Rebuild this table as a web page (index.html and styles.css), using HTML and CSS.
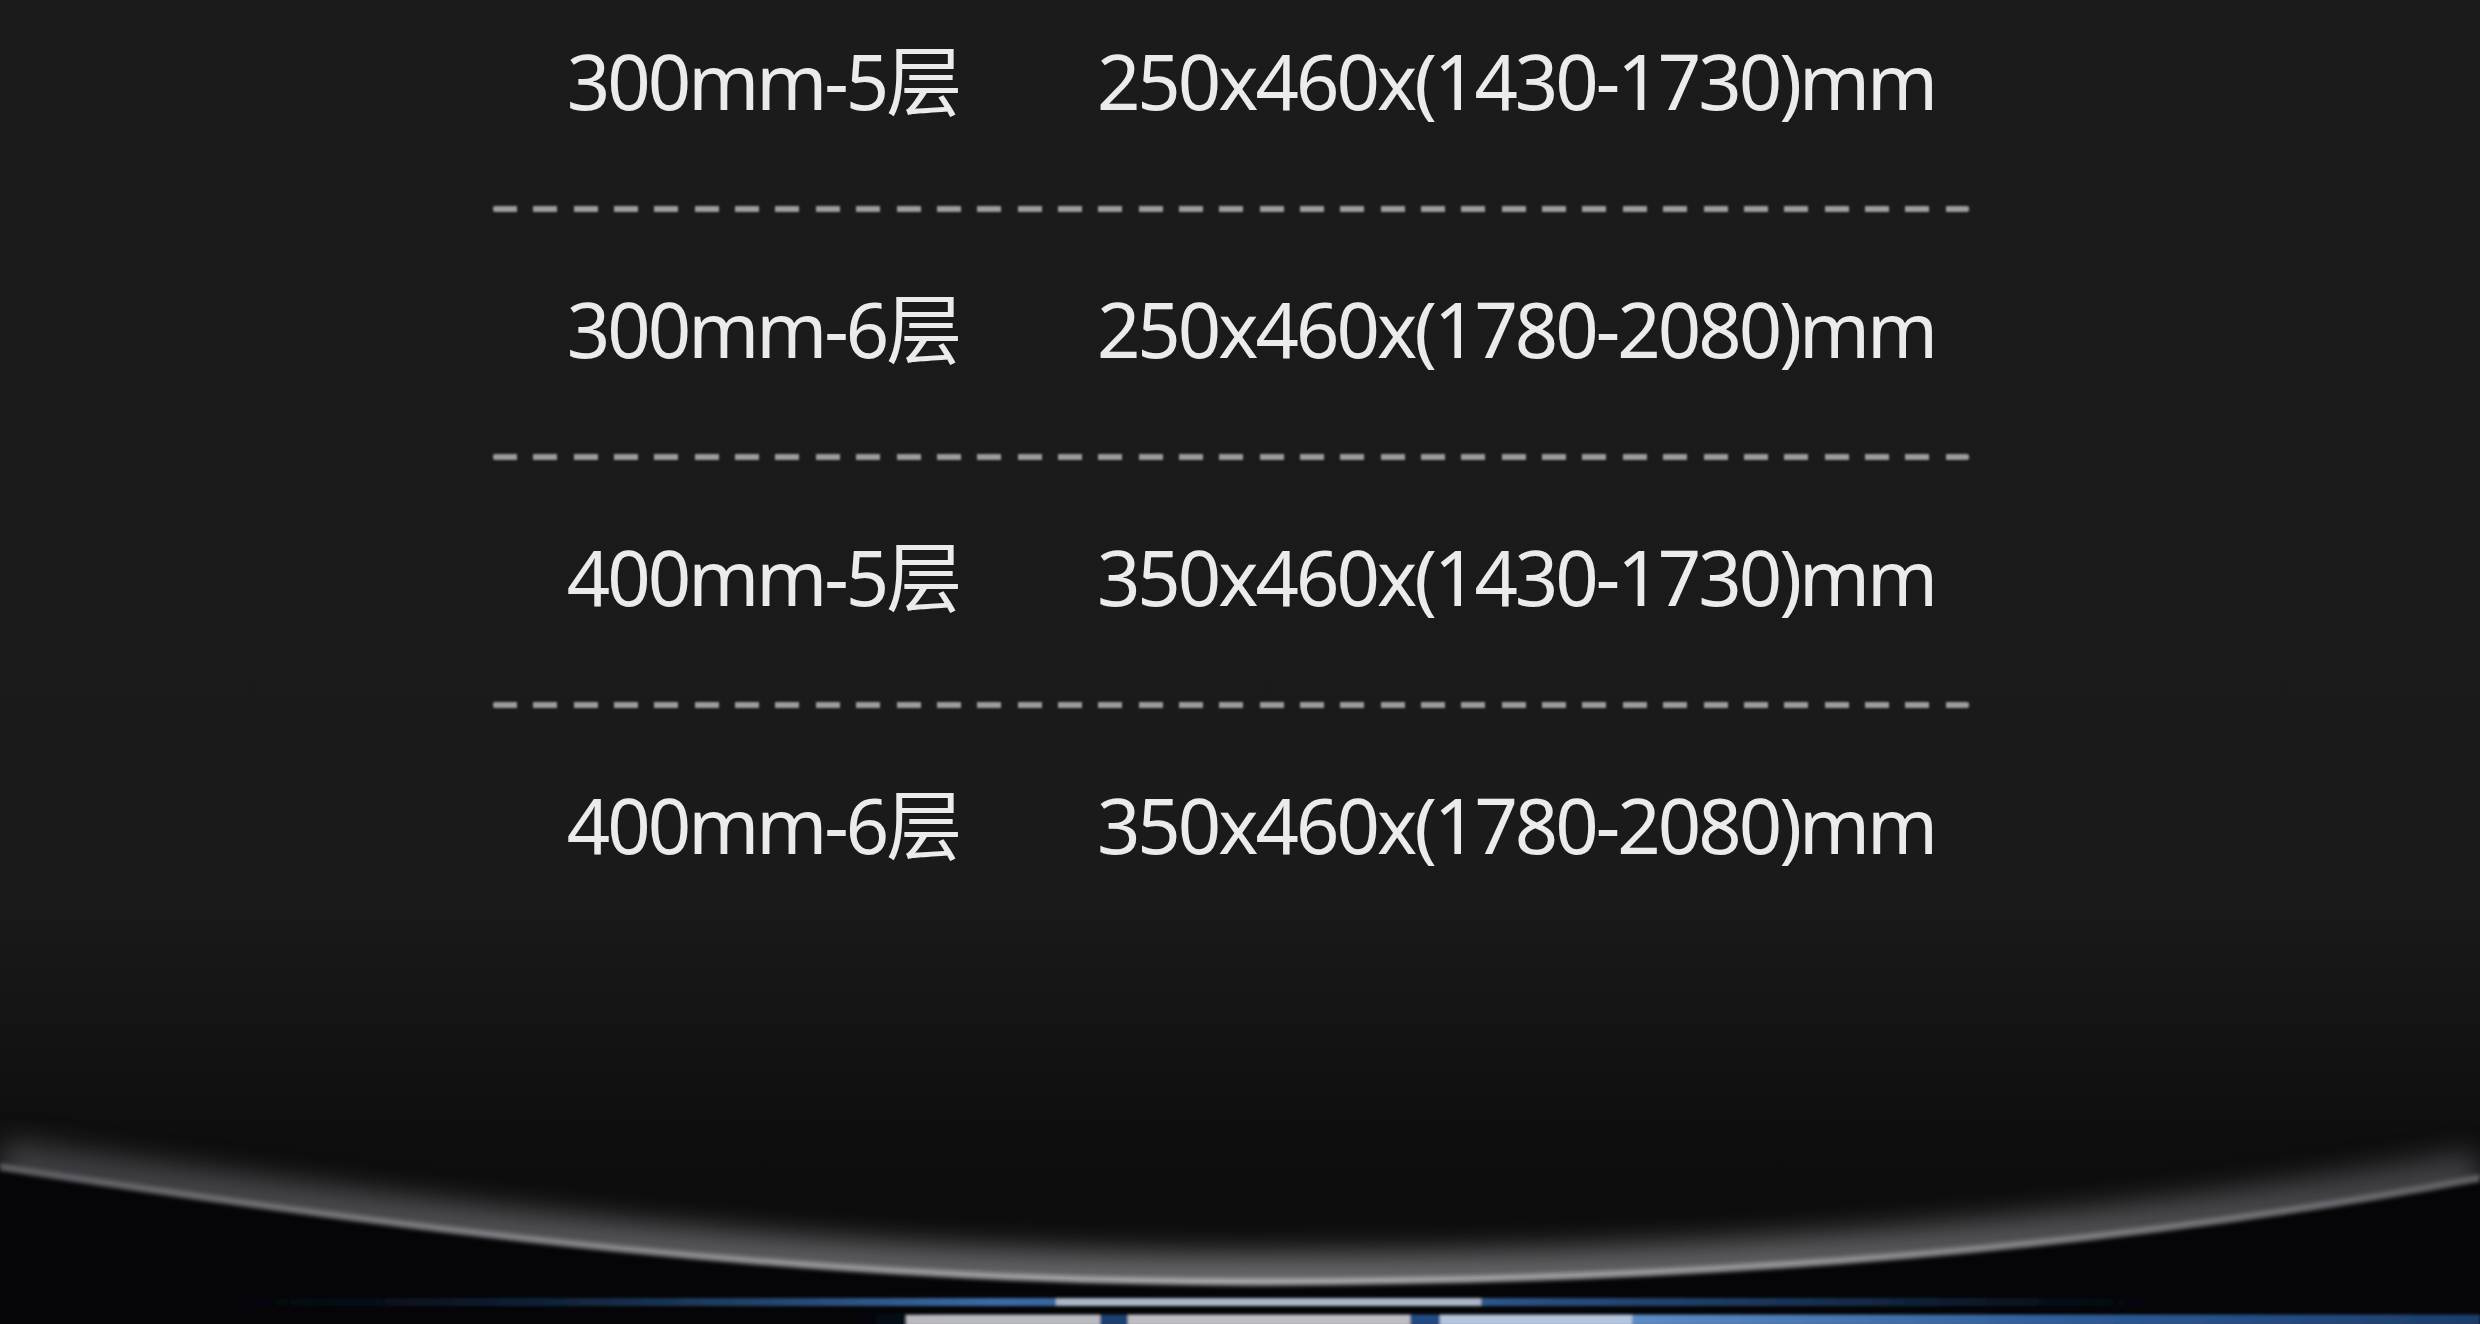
FILE: index.html
```html
<!DOCTYPE html>
<html lang="zh-CN">
<head>
<meta charset="utf-8">
<title>规格尺寸</title>
<link rel="stylesheet" href="styles.css">
</head>
<body>
<div class="page">

  <div class="spec">
    <div class="row">
      <div class="size">300mm-5层</div>
      <div class="dim">250x460x(1430-1730)mm</div>
    </div>
    <div class="dash"></div>
    <div class="row">
      <div class="size">300mm-6层</div>
      <div class="dim">250x460x(1780-2080)mm</div>
    </div>
    <div class="dash"></div>
    <div class="row">
      <div class="size">400mm-5层</div>
      <div class="dim">350x460x(1430-1730)mm</div>
    </div>
    <div class="dash"></div>
    <div class="row">
      <div class="size">400mm-6层</div>
      <div class="dim">350x460x(1780-2080)mm</div>
    </div>
  </div>

  <div class="horizon">
    <svg width="2480" height="324" viewBox="0 0 2480 324">
      <defs>
        <filter id="soft" x="-10%" y="-200%" width="120%" height="500%">
          <feGaussianBlur stdDeviation="14"/>
        </filter>
        <filter id="edge" x="-5%" y="-50%" width="110%" height="200%">
          <feGaussianBlur stdDeviation="2"/>
        </filter>
        <filter id="bar" x="-5%" y="-200%" width="110%" height="500%">
          <feGaussianBlur stdDeviation="1.4"/>
        </filter>
        <linearGradient id="rim" x1="0" y1="0" x2="2480" y2="0" gradientUnits="userSpaceOnUse">
          <stop offset="0" stop-color="#5c5c62"/>
          <stop offset="0.3" stop-color="#909096"/>
          <stop offset="0.5" stop-color="#a8a8ac"/>
          <stop offset="0.72" stop-color="#949499"/>
          <stop offset="1" stop-color="#606066"/>
        </linearGradient>
        <linearGradient id="beam" x1="0" y1="0" x2="2480" y2="0" gradientUnits="userSpaceOnUse">
          <stop offset="0.08" stop-color="#0a1424" stop-opacity="0"/>
          <stop offset="0.26" stop-color="#16304f"/>
          <stop offset="0.4" stop-color="#3a6aa4"/>
          <stop offset="0.6" stop-color="#2c5488"/>
          <stop offset="0.75" stop-color="#142a48"/>
          <stop offset="0.88" stop-color="#0a1424" stop-opacity="0"/>
        </linearGradient>
        <linearGradient id="tail" x1="1632" y1="0" x2="2480" y2="0" gradientUnits="userSpaceOnUse">
          <stop offset="0" stop-color="#5d8cc4"/>
          <stop offset="0.5" stop-color="#2f5e98"/>
          <stop offset="1" stop-color="#1c3c6a"/>
        </linearGradient>
        <linearGradient id="navy" x1="850" y1="0" x2="2480" y2="0" gradientUnits="userSpaceOnUse">
          <stop offset="0" stop-color="#07142a" stop-opacity="0"/>
          <stop offset="0.06" stop-color="#07142a"/>
          <stop offset="1" stop-color="#07142a"/>
        </linearGradient>
        <clipPath id="above">
          <path d="M0,167 C420,232 820,282 1250,282 C1680,282 2100,250 2480,178 L2480,0 L0,0 Z"/>
        </clipPath>
      </defs>

      <!-- dark ground under the arc -->
      <path class="ground" d="M0,167 C420,232 820,282 1250,282 C1680,282 2100,250 2480,178 L2480,324 L0,324 Z"/>

      <!-- soft light inside the arc -->
      <g clip-path="url(#above)">
        <path d="M0,167 C420,232 820,282 1250,282 C1680,282 2100,250 2480,178" fill="none" stroke="url(#rim)" stroke-width="56" opacity="0.6" filter="url(#soft)"/>
      </g>

      <!-- bright rim -->
      <path d="M0,167 C420,232 820,282 1250,282 C1680,282 2100,250 2480,178" fill="none" stroke="url(#rim)" stroke-width="7" filter="url(#edge)"/>

      <!-- blue light strip -->
      <g filter="url(#bar)">
        <rect x="150" y="298" width="2050" height="8" fill="url(#beam)"/>
        <rect x="1056" y="298" width="425" height="8" fill="#a9b5c6"/>
      </g>

      <!-- bottom bars -->
      <g filter="url(#bar)">
        <rect x="850" y="314" width="1630" height="12" fill="url(#navy)"/>
        <rect x="906" y="315" width="194" height="11" fill="#b8b8bf"/>
        <rect x="1100" y="315" width="28" height="11" fill="#1d3f70"/>
        <rect x="1128" y="315" width="282" height="11" fill="#bdbdc3"/>
        <rect x="1410" y="315" width="30" height="11" fill="#224b82"/>
        <rect x="1440" y="315" width="192" height="11" fill="#b4c5dd"/>
        <rect x="1632" y="315" width="848" height="11" fill="url(#tail)"/>
      </g>
    </svg>
  </div>

</div>
</body>
</html>
```

FILE: styles.css
```css
html, body {
  margin: 0;
  padding: 0;
}

body {
  background: #1a1a1a;
  font-family: "Noto Sans", "Noto Sans CJK SC", sans-serif;
  color: #ebebeb;
}

.page {
  width: 2480px;
  height: 1324px;
  overflow: hidden;
  display: flex;
  flex-direction: column;
  background: linear-gradient(to bottom, #1b1b1b 0, #1a1a1a 900px, #141414 1020px, #0e0e0e 1140px, #0c0c0c 1324px);
}

.spec {
  width: 1476px;
  margin: -40px 0 0 493px;
}

.row {
  height: 242px;
  display: grid;
  grid-template-columns: 540px 1fr;
  align-items: center;
  font-size: 76px;
  font-weight: 400;
  letter-spacing: -3px;
  line-height: 1;
}

.size {
  text-align: center;
}

.dim {
  text-align: center;
  padding-left: 30px;
}

.dash {
  height: 6px;
  margin: 4px 0 -4px;
  border-radius: 2px;
  background: repeating-linear-gradient(to right, #9c9c9c 0, #9c9c9c 24px, transparent 24px, transparent 40.35px);
  filter: blur(0.8px);
}

.horizon {
  margin-top: auto;
  height: 324px;
}

.horizon svg {
  display: block;
}

.ground {
  fill: #050507;
}
```
